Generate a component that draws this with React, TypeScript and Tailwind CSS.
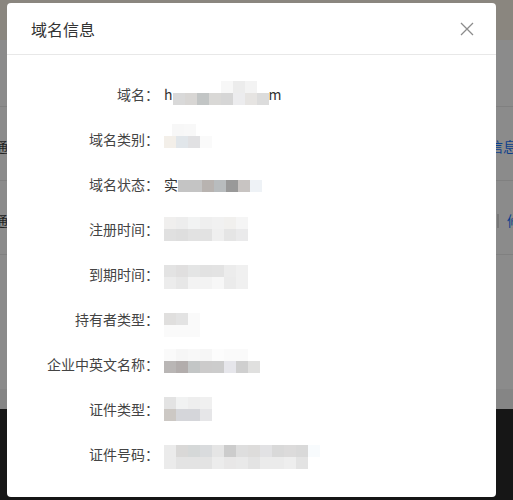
import React from "react";

type Cells = { x: number; c: string[] };

interface InfoRow {
  label: string;
  prefix?: string;
  suffix?: string;
  top?: Cells;
  bottom?: Cells;
  dy: number;
}

const rows: InfoRow[] = [
  {
    label: "域名",
    prefix: "h",
    suffix: "m",
    top: { x: 48, c: ["#f7f7f7", "#ececec", "#f3f3f3"] },
    bottom: { x: 0, c: ["#d9d9d9", "#d8d6d4", "#c2c5c5", "#d9d8d6", "#d6d6d6", "#ececee", "#e6e4e2", "#dcdcdc"] },
    dy: -2,
  },
  {
    label: "域名类别",
    top: { x: 8, c: ["#f7f7f7", "#f8f8f8"] },
    bottom: { x: 0, c: ["#f3efe9", "#e1e6ea", "#e1e1e3", "#fafafa"] },
    dy: -4,
  },
  {
    label: "域名状态",
    prefix: "实",
    bottom: { x: 0, c: ["#c4c4c4", "#c4c4c4", "#b8b3b0", "#b8bcbe", "#999999", "#c8c4c2", "#eef2f6"] },
    dy: 1,
  },
  {
    label: "注册时间",
    top: { x: 0, c: ["#f0efee", "#ededed", "#f2f3f3", "#efefef", "#f1f1f1", "#f1f0ee", "#f5f5f5"] },
    bottom: { x: 0, c: ["#e0e0e0", "#dedede", "#e2e2e2", "#e2e2e2", "#efefef", "#e5e5e5", "#eaeaeb"] },
    dy: -1,
  },
  {
    label: "到期时间",
    top: { x: 0, c: ["#e3e3e3", "#e0dfdf", "#e4e5e5", "#e2e2e2", "#e3e3e3", "#ececec", "#f0f0f0"] },
    bottom: { x: 0, c: ["#ececec", "#e7e7e7", "#f3f3f3", "#f3f3f3", "#f7f7f7", "#ebebeb", "#f0f0f0"] },
    dy: 2,
  },
  {
    label: "持有者类型",
    top: { x: 0, c: ["#e0dfde", "#e3e3e3", "#fafafa"] },
    bottom: { x: 0, c: ["#fafafa", "#fafafa", "#fafafa"] },
    dy: 5,
  },
  {
    label: "企业中英文名称",
    top: { x: 0, c: ["#fafafa", "#f6f6f6", "#f8f8f8", "#f6f6f6", "#fcfcfc", "#fafafa", "#fafafa"] },
    bottom: { x: 0, c: ["#b9b6b5", "#b2adac", "#c3c6c6", "#cccbcb", "#cccccc", "#e6e6eb", "#cfcfcf", "#e0e0df"] },
    dy: -4,
  },
  {
    label: "证件类型",
    top: { x: 0, c: ["#e3e3e3", "#f1f2f2", "#eeeeee", "#f0f0f0"] },
    bottom: { x: 0, c: ["#ccc8c4", "#d5d6da", "#d5d6da", "#e6e6e8"] },
    dy: -1,
  },
  {
    label: "证件号码",
    top: {
      x: 0,
      c: ["#ebebeb", "#d9d8d7", "#d5d8d8", "#d9dbdd", "#e5e5e5", "#cccccc", "#dedede", "#dddcdb", "#e2e2e4", "#d9d9d9", "#dcdbdb", "#d9d9d9", "#f8fbfd"],
    },
    bottom: {
      x: 0,
      c: ["#ebebeb", "#e3e3e3", "#e3e3e3", "#e3e3e3", "#ececec", "#e8e7e7", "#e9e9e9", "#e3e3e3", "#ebebeb", "#ebebeb", "#eeeeee", "#e3e3e3"],
    },
    dy: 2,
  },
];

function CellRow({ cells }: { cells?: Cells }) {
  if (!cells) return null;
  return (
    <div className="flex h-[12px]" style={{ marginLeft: cells.x }}>
      {cells.c.map((c, i) => (
        <div key={i} className="w-[12px] h-[12px]" style={{ backgroundColor: c }} />
      ))}
    </div>
  );
}

function Mosaic({ row }: { row: InfoRow }) {
  return (
    <div className="relative flex flex-col" style={{ top: row.dy }}>
      <CellRow cells={row.top} />
      <CellRow cells={row.bottom} />
    </div>
  );
}

function Background() {
  return (
    <div className="w-[513px] h-[500px] flex flex-col bg-[#8b8b8b] text-[14px]">
      <div className="h-[40px] bg-[#8a867f]" />
      <div className="h-[67px] border-b border-[#808080]" />
      <div className="h-[74px] pt-[6px] border-b border-[#808080] flex items-center justify-between">
        <span className="-ml-[6px] text-[#222]">通</span>
        <span className="text-[#0c3f8c] -mr-[4px]">信息</span>
      </div>
      <div className="h-[74px] pt-[6px] border-b border-[#808080] flex items-center justify-between">
        <span className="-ml-[6px] text-[#222]">通</span>
        <span className="flex items-center gap-[8px] -mr-[8px]">
          <span className="w-[2px] h-[14px] bg-[#777]" />
          <span className="text-[#0c3f8c]">修</span>
        </span>
      </div>
      <div className="h-[134px]" />
      <div className="h-[20px] bg-[#858585]" />
      <div className="flex-1 bg-[#161616]" />
    </div>
  );
}

export default function App() {
  return (
    <div
      className="relative w-[513px] h-[500px] overflow-hidden"
      style={{ fontFamily: '"Noto Sans CJK SC", "Noto Sans", sans-serif' }}
    >
      <Background />
      <div className="absolute left-[7px] top-[3px] w-[489px] h-[494px] bg-white rounded-[4px] flex flex-col">
        <div className="h-[52px] border-b border-[#e8e8e8] flex items-center justify-between pl-[24px] pr-[22px]">
          <span className="text-[16px] text-[#333]">域名信息</span>
          <svg width="14" height="14" viewBox="0 0 14 14">
            <path d="M1 1L13 13M13 1L1 13" stroke="#8c8c8c" strokeWidth="1.3" fill="none" />
          </svg>
        </div>
        <div className="pt-[17px] flex flex-col">
          {rows.map((row) => (
            <div key={row.label} className="h-[45px] flex items-center text-[14px]">
              <div className="w-[152px] text-right text-[#444]">{row.label}：</div>
              <div className="ml-[5px] flex items-center text-[#333]">
                {row.prefix && <span>{row.prefix}</span>}
                <Mosaic row={row} />
                {row.suffix && <span>{row.suffix}</span>}
              </div>
            </div>
          ))}
        </div>
      </div>
    </div>
  );
}
